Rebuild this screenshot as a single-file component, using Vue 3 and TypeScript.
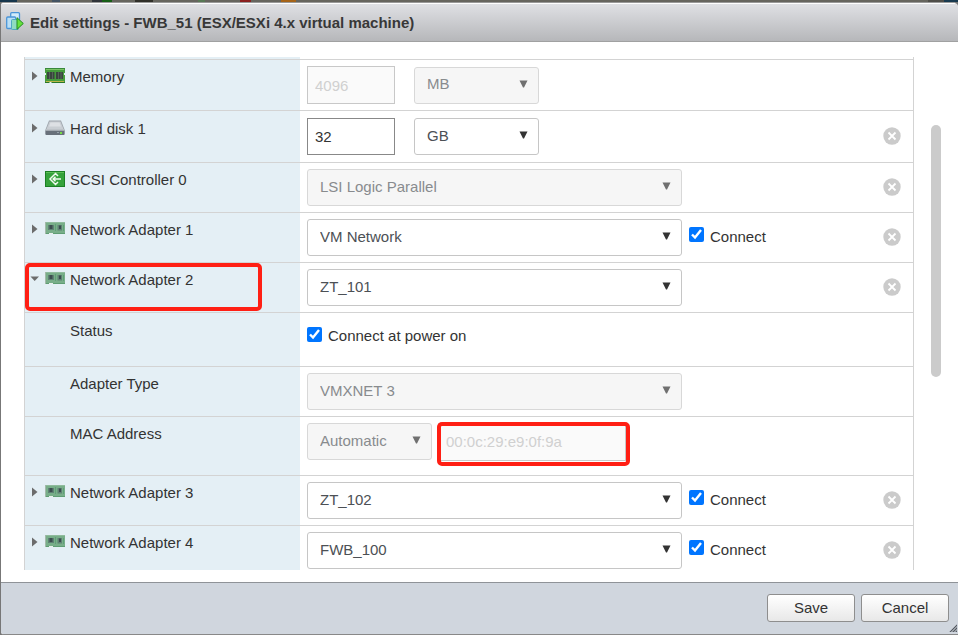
<script setup lang="ts">
import { reactive } from 'vue'

type IconKind = 'memory' | 'disk' | 'scsi' | 'nic'

interface Device {
  id: string
  label: string
  icon?: IconKind
  open?: boolean
  size?: string
  select?: string
  options?: string[]
  narrow?: boolean
  disabled?: boolean
  connect?: boolean
  check?: string
  mac?: string
  removable?: boolean
  marked?: boolean
}

const networks = ['VM Network', 'ZT_101', 'ZT_102', 'FWB_100']
const units = ['MB', 'GB']

const devices = reactive<Device[]>([
  { id: 'memory', label: 'Memory', icon: 'memory', size: '4096', select: 'MB', options: units, narrow: true, disabled: true },
  { id: 'disk', label: 'Hard disk 1', icon: 'disk', size: '32', select: 'GB', options: units, narrow: true, removable: true },
  { id: 'scsi', label: 'SCSI Controller 0', icon: 'scsi', select: 'LSI Logic Parallel', options: ['LSI Logic Parallel'], disabled: true, removable: true },
  { id: 'nic1', label: 'Network Adapter 1', icon: 'nic', select: 'VM Network', options: networks, connect: true, removable: true },
  { id: 'nic2', label: 'Network Adapter 2', icon: 'nic', open: true, select: 'ZT_101', options: networks, removable: true, marked: true },
  { id: 'status', label: 'Status', check: 'Connect at power on', connect: true },
  { id: 'type', label: 'Adapter Type', select: 'VMXNET 3', options: ['VMXNET 3'], disabled: true },
  { id: 'mac', label: 'MAC Address', select: 'Automatic', options: ['Automatic', 'Manual'], narrow: true, disabled: true, mac: '00:0c:29:e9:0f:9a' },
  { id: 'nic3', label: 'Network Adapter 3', icon: 'nic', select: 'ZT_102', options: networks, connect: true, removable: true },
  { id: 'nic4', label: 'Network Adapter 4', icon: 'nic', select: 'FWB_100', options: networks, connect: true, removable: true },
])
</script>

<template>
  <div class="page">
    <div class="backdrop"></div>
    <main class="dialog">
      <header class="title-bar">
        <svg class="title-icon" width="18" height="19" viewBox="0 0 18 19" aria-hidden="true">
          <rect x="4.7" y="0.700" width="8.800" height="9" rx="1" fill="#d3ecfa" stroke="#4b95d8" stroke-width="1.300" />
          <rect x="0.700" y="5" width="9" height="11.500" rx="1" fill="#b9dff6" stroke="#4b95d8" stroke-width="1.300" />
          <rect x="5.500" y="7.500" width="7" height="10" rx="1" fill="#8fdcc0" stroke="#4fa9c0" />
          <path d="M11 5.700 L17.300 11.500 L11 17.300 Z" fill="#66e23c" stroke="#208a20" stroke-linejoin="round" />
        </svg>
        <h1>Edit settings - FWB_51 (ESX/ESXi 4.x virtual machine)</h1>
      </header>

      <div class="body">
        <div class="list">
          <div class="row stub"><div class="name"></div></div>
          <div v-for="d in devices" :key="d.id" class="row" :class="'row-' + d.id">
            <div class="name">
              <button v-if="d.icon" type="button" class="toggle" :aria-expanded="!!d.open" :aria-label="'Toggle ' + d.label" @click="d.open = !d.open">
                <svg width="10" height="10" viewBox="0 0 10 10">
                  <path v-if="d.open" d="M0.500 2.500 H9 L4.700 7 Z" fill="#6c6c6c" />
                  <path v-else d="M2 0.500 V9.500 L7.500 5 Z" fill="#6c6c6c" />
                </svg>
              </button>
              <svg v-if="d.icon === 'memory'" class="icon" width="20" height="16" viewBox="0 0 20 16" aria-hidden="true">
                <rect width="20" height="15" fill="#459b3c" />
                <path d="M0 0.500 H20" stroke="#39893a" />
                <path d="M1 1.500 H19" stroke="#7cc464" />
                <path d="M2 4 H9.500 V11 H2 Z M11 4 H18 V11 H11 Z" fill="#39463e" />
                <path d="M4.500 4 V11 M7.500 4 V11 M13.500 4 V11 M16 4 V11" stroke="#5d6a62" stroke-width="0.800" />
                <path d="M1 13.500 H19" stroke="#b9b648" />
                <path d="M0 14.500 H20" stroke="#2b7629" />
                <path d="M4.500 16 V14 H6.500 V16 Z M0 5 H1 V7 H0 Z M19 5 H20 V7 H19 Z" fill="#e4eff5" />
              </svg>
              <svg v-else-if="d.icon === 'disk'" class="icon" width="20" height="16" viewBox="0 0 20 16" aria-hidden="true">
                <path d="M4 0.500 H16 L19.500 9.500 V14 Q19.500 15 18.500 15 H1.500 Q0.500 15 0.500 14 V9.500 Z" fill="#9da3aa" />
                <path d="M4.500 1.500 H15.500 L18.500 9 H1.500 Z" fill="#c9ced3" />
                <path d="M5.500 2.500 H14.500 L16 6.500 H4 Z" fill="#dde0e4" />
                <rect x="0.500" y="10" width="19" height="5" rx="1" fill="#68707a" />
                <path d="M1 10 H19" stroke="#dfe3e7" />
                <path d="M12 12.500 H14" stroke="#98a3ac" />
                <rect x="15" y="12" width="2" height="2" fill="#75dc46" />
              </svg>
              <svg v-else-if="d.icon === 'scsi'" class="icon" width="20" height="16" viewBox="0 0 20 16" aria-hidden="true">
                <rect x="0.500" y="0.500" width="19" height="15" fill="#35a23b" stroke="#1b7f24" />
                <path d="M1 1.500 H19" stroke="#5dbd57" />
                <path d="M13 5 L10.500 2.500 L5 8 L10.500 13.500 L13 11 M8.500 8 H16 M10.500 5.700 L8.200 8 L10.500 10.300" fill="none" stroke="#f0faef" stroke-width="1.500" />
              </svg>
              <svg v-else-if="d.icon === 'nic'" class="icon" width="20" height="16" viewBox="0 0 20 16" aria-hidden="true">
                <rect y="1" width="20" height="12" fill="#78ae89" />
                <path d="M0 1.500 H20" stroke="#8fbb9c" />
                <path d="M0.500 1 V13" stroke="#a3b9a9" />
                <path d="M3 4 h6 v5 H3z M12.500 4 h4.500 v5.500 h-4.500z" fill="#5f8274" />
                <path d="M4.500 4 h3 v4 h-3z M14 4.500 h2 v3.500 h-2z" fill="#3c4d50" />
                <path d="M10.500 3 V10 M18.500 4 V10" stroke="#5f9f77" />
                <path d="M1 12.500 H20" stroke="#5f9d73" />
                <path d="M4 13 V12 H8 V13 Z" fill="#e9efea" />
              </svg>
              <label :for="(d.size ? 'size-' : d.check ? 'check-' : 'select-') + d.id">{{ d.label }}</label>
              <span v-if="d.marked" class="mark mark-name"></span>
            </div>

            <div class="value">
              <input v-if="d.size" :id="'size-' + d.id" v-model="d.size" class="text-box" type="text" :disabled="d.disabled" />
              <span v-if="d.select" class="picker" :class="{ narrow: d.narrow, off: d.disabled }">
                <select :id="'select-' + d.id" v-model="d.select" :disabled="d.disabled" :aria-label="d.label">
                  <option v-for="o in d.options" :key="o" :value="o">{{ o }}</option>
                </select>
                <svg class="arrow" width="9" height="8" viewBox="0 0 9 8" aria-hidden="true">
                  <path d="M0.500 0.500 H8.500 L5 7.500 H4 Z" fill="currentColor" />
                </svg>
              </span>
              <span v-if="d.mac" class="mac">
                <input v-model="d.mac" class="text-box" type="text" disabled aria-label="MAC Address" />
                <span class="mark mark-mac"></span>
              </span>
              <label v-if="d.connect !== undefined" class="check">
                <input :id="'check-' + d.id" v-model="d.connect" type="checkbox" />
                <span>{{ d.check ?? 'Connect' }}</span>
              </label>
              <button v-if="d.removable" type="button" class="remove" :aria-label="'Remove ' + d.label">
                <svg width="18" height="18" viewBox="0 0 18 18">
                  <circle cx="9" cy="9" r="8.700" fill="#cbcbcb" />
                  <path d="M5.500 5.500 L12.500 12.500 M12.500 5.500 L5.500 12.500" stroke="#fff" stroke-width="1.800" />
                </svg>
              </button>
            </div>
          </div>
        </div>
        <div class="scroll"><div class="thumb"></div></div>
      </div>

      <footer class="actions">
        <button type="button">Save</button>
        <button type="button">Cancel</button>
        <svg class="grip" width="8" height="8" viewBox="0 0 8 8" aria-hidden="true">
          <path d="M0 8 L8 0 V8 Z" fill="#999ea5" />
          <path d="M1 8 L8 1 M4 8 L8 4 M7 8 L8 7" stroke="#555b63" />
        </svg>
      </footer>
    </main>
  </div>
</template>

<style>
body {
  margin: 0;
}
</style>

<style scoped>
.page {
  display: flex;
  flex-direction: column;
  height: 100vh;
  box-sizing: border-box;
  padding-left: 1px;
  background: #777;
  color: #333;
  font: 15px/18px "Liberation Sans", Arial, sans-serif;
}

.backdrop {
  height: 2px;
  margin-left: -1px;
  background: linear-gradient(90deg,
    #17364d 0 17px, #66655e 17px 52px, #435363 52px 60px, #66655e 60px 92px,
    #30343a 92px 102px, #175f17 102px 112px, #66655e 112px 135px, #302f29 135px 153px,
    #66655e 153px 198px, #587955 198px 205px, #66655e 205px 240px, #8b2020 240px 251px,
    #66655e 251px 281px, #a66419 281px 296px, #66655e 296px 928px, #4f4e49 928px 944px, #193a50 944px);
}

.dialog {
  display: flex;
  flex: 1;
  flex-direction: column;
  min-height: 0;
  background: #fff;
  border-top: 1px solid #999;
  border-bottom: 1px solid #888;
  border-radius: 3px 5px 0 3px;
  overflow: hidden;
}

.title-bar {
  display: flex;
  align-items: center;
  gap: 6px;
  height: 37px;
  padding-left: 5px;
  border-top: 1px solid #fff;
  border-bottom: 1px solid #a0a1a1;
  background: linear-gradient(#dfe0e4, #b6b7ba);
}

.title-icon {
  margin-bottom: 3px;
}

h1 {
  margin: 0;
  font-size: 15px;
  line-height: 18px;
  color: #383838;
}

.body {
  display: flex;
  flex: 1;
  min-height: 0;
  padding: 15px 0 12px 23px;
}

.list {
  flex: 1;
  border: solid #d3d3d3;
  border-width: 0 1px;
  overflow: hidden;
}

.row {
  display: grid;
  grid-template-columns: 275px 1fr;
  height: 50px;
  box-sizing: border-box;
  border-top: 1px solid #d3d3d3;
}

.row.stub {
  height: 2px;
  border-top: 0;
}

.row-memory {
  height: 51px;
}

.row-disk {
  height: 52px;
}

.row-status {
  height: 54px;
}

.row-mac {
  height: 59px;
}

.name {
  position: relative;
  display: flex;
  align-items: flex-start;
  padding: 8px 0 0 45px;
  background: #e4eff5;
}

.row-disk .name,
.row-status .name {
  padding-top: 9px;
}

.stub .name {
  padding: 0;
}

.name:has(.toggle) {
  padding-left: 5px;
}

.toggle {
  width: 10px;
  height: 10px;
  margin: 3px 5px 0 0;
  padding: 0;
  border: 0;
  background: none;
}

.toggle svg,
.remove svg {
  display: block;
}

.icon {
  margin: 0 5px 0 0;
}

.value {
  display: flex;
  align-items: center;
  padding: 0 12px 0 7px;
}

.row-status .value {
  padding-bottom: 7px;
}

.row-mac .value {
  padding-bottom: 9px;
}

.text-box {
  width: 88px;
  height: 37px;
  box-sizing: border-box;
  margin: 0 19px 0 0;
  padding: 0 7px;
  border: 1px solid #888;
  border-radius: 0;
  background: #fff;
  color: #333;
  font: inherit;
}

.text-box:disabled {
  height: 38px;
  border-color: #c8c8c8;
  background: #fafafa;
  color: #d0d0d0;
}

.picker {
  display: grid;
  width: 375px;
  color: #333;
}

.picker.narrow {
  width: 125px;
}

.picker select,
.arrow {
  grid-area: 1 / 1;
}

.picker select {
  appearance: none;
  width: 100%;
  height: 37px;
  padding: 0 24px 2px 12px;
  border: 1px solid #c6c6c6;
  border-radius: 3px;
  background: #fff;
  color: #4c5055;
  font: inherit;
}

.picker.off {
  color: #707070;
}

.picker.off select {
  border-color: #d8d8d8;
  background: #f6f6f6;
  color: #888b8e;
  opacity: 1;
}

.arrow {
  place-self: center end;
  margin: 0 11px 3px 0;
  pointer-events: none;
}

.check {
  display: flex;
  align-items: center;
  gap: 6px;
}

.picker + .check {
  margin: 0 0 2px 7px;
}

.check input {
  width: 15px;
  height: 15px;
  margin: 0 0 4px;
  accent-color: #0075ff;
}

.mac {
  position: relative;
  margin-left: 6px;
}

.mac .text-box {
  display: block;
  width: 188px;
  margin: 0;
}

.mark {
  position: absolute;
  border: 4px solid #ff1f14;
  border-radius: 5px;
  pointer-events: none;
}

.mark-name {
  inset: 0 38px 1px 0;
}

.mark-mac {
  inset: -1px -4px -5px -1px;
}

.remove {
  margin: 0 0 2px auto;
  padding: 0;
  border: 0;
  background: none;
}

.scroll {
  width: 44px;
}

.thumb {
  width: 10px;
  height: 252px;
  margin: 68px auto 0;
  border-radius: 5px;
  background: #cbcbcb;
}

.actions {
  position: relative;
  display: flex;
  justify-content: flex-end;
  gap: 6px;
  padding: 11px 9px 12px;
  border-top: 1px solid #8f9398;
  background: #d0d6de;
}

.actions button {
  width: 88px;
  height: 28px;
  padding: 0;
  border: 1px solid #8e8e8e;
  border-radius: 3px;
  background: linear-gradient(#fff, #e8e8e8);
  color: #333;
  font: inherit;
}

.grip {
  position: absolute;
  right: 1px;
  bottom: 2px;
}
</style>
